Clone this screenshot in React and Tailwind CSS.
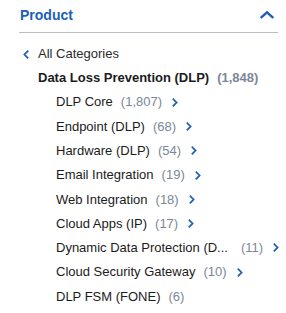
import React from "react";

const Chevron = ({ dir = "right", className = "" }) => {
  const paths = {
    right: "M3 1.5 L7 5.5 L3 9.5",
    left: "M7 1.5 L3 5.5 L7 9.5",
    up: "M1.5 7.5 L6.5 3 L11.5 7.5",
  };
  const vb = dir === "up" ? "0 0 13 11" : "0 0 10 11";
  return (
    <svg viewBox={vb} className={className} fill="none" stroke="currentColor" strokeWidth="2.2" strokeLinecap="square">
      <path d={paths[dir]} />
    </svg>
  );
};

const items = [
  ["DLP Core", "1,807", true, false],
  ["Endpoint (DLP)", "68", true, false],
  ["Hardware (DLP)", "54", true, false],
  ["Email Integration", "19", true, false],
  ["Web Integration", "18", true, false],
  ["Cloud Apps (IP)", "17", true, false],
  ["Dynamic Data Protection (D...", "11", true, true],
  ["Cloud Security Gateway", "10", true, false],
  ["DLP FSM (FONE)", "6", false, false],
];

export default function App() {
  return (
    <div className="w-[286px] h-[313px] bg-white text-[13px] text-[#1b1b1b]" style={{ fontFamily: '"Liberation Sans", Arial, sans-serif' }}>
      <div className="ml-[19px] mr-[8px] h-[33px] flex items-center justify-between border-b border-[#b9bdc5]">
        <span className="text-[14px] font-bold text-[#1c5fb8] mt-[-2px] ml-[1px]">Product</span>
        <Chevron dir="up" className="w-[14px] h-[12px] text-[#1c5fb8] mr-[4px] mt-[-2px]" />
      </div>
      <div className="pt-[9px]">
        <div className="flex items-center h-[24px] ml-[22px]">
          <Chevron dir="left" className="w-[8px] h-[11px] text-[#1c5fb8] mr-[8px]" />
          <span className="text-[#2a2a2a]">All Categories</span>
        </div>
        <div className="flex items-center h-[24px] ml-[38px]">
          <span className="font-bold">Data Loss Prevention (DLP)</span>
          <span className="ml-[8px] font-bold text-[#7b8798]">(1,848)</span>
        </div>
        {items.map(([name, count, chev, wide]) => (
          <div key={name} className="flex items-center h-[24.3px] ml-[56px]">
            <span>{name}</span>
            <span className={wide ? "ml-[13px] text-[#7b8798]" : "ml-[8px] text-[#7b8798]"}>({count})</span>
            {chev && <Chevron dir="right" className="w-[8px] h-[11px] text-[#1c5fb8] ml-[9px]" />}
          </div>
        ))}
      </div>
    </div>
  );
}
